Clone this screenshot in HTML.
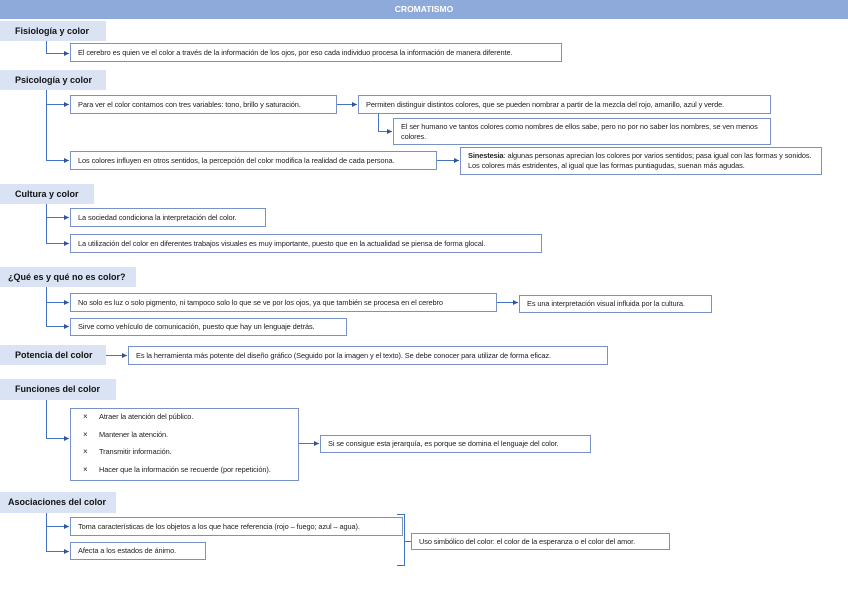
<!DOCTYPE html>
<html><head><meta charset="utf-8"><style>
*{margin:0;padding:0;box-sizing:border-box}
body{width:848px;height:599px;background:#fff;position:relative;overflow:hidden;font-family:"Liberation Sans",sans-serif;color:#222}
.hdr{position:absolute;left:0;top:0;width:848px;height:19px;background:#8eaadb;color:#fff;font-weight:bold;font-size:8.5px;text-align:center;line-height:19px}
.lab{position:absolute;left:0;background:#dae3f3;font-weight:bold;font-size:9px;line-height:20px;height:20px;padding-left:15px;color:#111}
.b{position:absolute;border:1px solid #7892c8;font-size:7.4px;line-height:10px;padding:0 7px;display:flex;align-items:center;white-space:nowrap;letter-spacing:-0.1px;background:#fff}
.w{white-space:normal}
svg{position:absolute;left:0;top:0}
ul{list-style:none}
li{font-size:7.4px;line-height:17.5px;padding-left:28px;position:relative}
li:before{content:"×";position:absolute;left:12px;font-size:8px}
</style></head><body>
<div class="hdr">CROMATISMO</div>
<svg width="848" height="599" fill="none" stroke="#4472c4" stroke-width="1">
<defs><marker id="a" markerWidth="6" markerHeight="6" refX="5" refY="3" orient="auto"><path d="M0,0.5L5,3L0,5.5z" fill="#2f5597" stroke="none"/></marker></defs>
<path d="M46.5 40V53.5H69" marker-end="url(#a)"/>
<path d="M46.5 89V160.5H69" marker-end="url(#a)"/>
<path d="M46.5 89V104.5H69" marker-end="url(#a)"/>
<path d="M337 104.5H357" marker-end="url(#a)"/>
<path d="M378.5 113V131.5H392" marker-end="url(#a)"/>
<path d="M437 160.5H459" marker-end="url(#a)"/>
<path d="M46.5 204V243.5H69" marker-end="url(#a)"/>
<path d="M46.5 204V217.5H69" marker-end="url(#a)"/>
<path d="M46.5 287V326.5H69" marker-end="url(#a)"/>
<path d="M46.5 287V302.5H69" marker-end="url(#a)"/>
<path d="M497 302.5H518" marker-end="url(#a)"/>
<path d="M106 355.5H127" marker-end="url(#a)"/>
<path d="M46.5 400V438.5H69" marker-end="url(#a)"/>
<path d="M299 443.5H319" marker-end="url(#a)"/>
<path d="M46.5 513V551.5H69" marker-end="url(#a)"/>
<path d="M46.5 513V526.5H69" marker-end="url(#a)"/>
<path d="M397 514.5H404.5V565.5H397M404.5 541.5H411"/>
</svg>
<div class="lab" style="top:21px;width:106px">Fisiología y color</div>
<div class="b" style="left:70px;top:43px;width:492px;height:19px">El cerebro es quien ve el color a través de la información de los ojos, por eso cada individuo procesa la información de manera diferente.</div>
<div class="lab" style="top:70px;width:106px">Psicología y color</div>
<div class="b" style="left:70px;top:95px;width:267px;height:19px">Para ver el color contamos con tres variables: tono, brillo y saturación.</div>
<div class="b" style="left:358px;top:95px;width:413px;height:19px">Permiten distinguir distintos colores, que se pueden nombrar a partir de la mezcla del rojo, amarillo, azul y verde.</div>
<div class="b w" style="left:393px;top:118px;width:378px;height:27px">El ser humano ve tantos colores como nombres de ellos sabe, pero no por no saber los nombres, se ven menos colores.</div>
<div class="b" style="left:70px;top:151px;width:367px;height:19px">Los colores influyen en otros sentidos, la percepción del color modifica la realidad de cada persona.</div>
<div class="b w" style="left:460px;top:147px;width:362px;height:28px"><span><b>Sinestesia</b>: algunas personas aprecian los colores por varios sentidos; pasa igual con las formas y sonidos. Los colores más estridentes, al igual que las formas puntiagudas, suenan más agudas.</span></div>
<div class="lab" style="top:184px;width:94px">Cultura y color</div>
<div class="b" style="left:70px;top:208px;width:196px;height:19px">La sociedad condiciona la interpretación del color.</div>
<div class="b" style="left:70px;top:234px;width:472px;height:19px">La utilización del color en diferentes trabajos visuales es muy importante, puesto que en la actualidad se piensa de forma glocal.</div>
<div class="lab" style="top:267px;width:136px;padding-left:8px">¿Qué es y qué no es color?</div>
<div class="b" style="left:70px;top:293px;width:427px;height:19px">No solo es luz o solo pigmento, ni tampoco solo lo que se ve por los ojos, ya que también se procesa en el cerebro</div>
<div class="b" style="left:519px;top:295px;width:193px;height:18px">Es una interpretación visual influida por la cultura.</div>
<div class="b" style="left:70px;top:318px;width:277px;height:18px">Sirve como vehículo de comunicación, puesto que hay un lenguaje detrás.</div>
<div class="lab" style="top:345px;width:106px">Potencia del color</div>
<div class="b" style="left:128px;top:346px;width:480px;height:19px">Es la herramienta más potente del diseño gráfico (Seguido por la imagen y el texto). Se debe conocer para utilizar de forma eficaz.</div>
<div class="lab" style="top:379px;width:116px;height:21px">Funciones del color</div>
<div class="b" style="left:70px;top:408px;width:229px;height:73px;padding:0;display:block"><ul style="margin-top:-1px"><li>Atraer la atención del público.</li><li>Mantener la atención.</li><li>Transmitir información.</li><li>Hacer que la información se recuerde (por repetición).</li></ul></div>
<div class="b" style="left:320px;top:435px;width:271px;height:18px">Si se consigue esta jerarquía, es porque se domina el lenguaje del color.</div>
<div class="lab" style="top:492px;width:116px;height:21px;padding-left:8px">Asociaciones del color</div>
<div class="b" style="left:70px;top:517px;width:333px;height:19px">Toma características de los objetos a los que hace referencia (rojo – fuego; azul – agua).</div>
<div class="b" style="left:70px;top:542px;width:136px;height:18px">Afecta a los estados de ánimo.</div>
<div class="b" style="left:411px;top:533px;width:259px;height:17px">Uso simbólico del color: el color de la esperanza o el color del amor.</div>
</body></html>
